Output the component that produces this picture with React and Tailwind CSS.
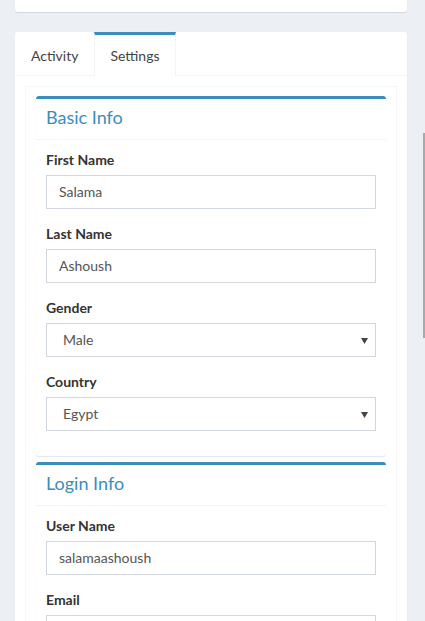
import React from 'react';

const Field = ({ label, value, select }) => (
  <div className="mb-[15px]">
    <label className="block mb-[5px] text-[14px] leading-[20px] font-bold text-[#333]">{label}</label>
    <div className="relative flex items-center h-[34px] border border-[#d2d6de] bg-white">
      <span className={`${select ? 'pl-[16px]' : 'pl-[12px]'} text-[14px] leading-[20px] pb-px text-[#555]`}>{value}</span>
      {select && (
        <svg className="absolute right-[7px] top-[14px]" width="7" height="6" viewBox="0 0 7 6">
          <path d="M0 0 H7 L3.5 6 Z" fill="#444" />
        </svg>
      )}
    </div>
  </div>
);

const Box = ({ title, children }) => (
  <div className="bg-white border-t-[3px] border-[#3c8dbc] rounded-[3px] shadow-[0_1px_1px_rgba(0,0,0,0.1)] mx-px">
    <div className="px-[10px] pt-[8px] pb-[12px] border-b border-[#f4f4f4]">
      <h3 className="text-[18px] leading-[20px] text-[#3c8dbc]">{title}</h3>
    </div>
    <div className="px-[10px] pt-[10px] pb-[10px]">{children}</div>
  </div>
);

export default function App() {
  return (
    <div className="min-h-screen bg-[#ecf0f5] pl-[15px] pr-[18px] relative overflow-hidden" style={{ fontFamily: 'Lato, "Noto Sans", sans-serif' }}>
      {/* top card, cut off */}
      <div className="h-[12px] bg-white rounded-b-[3px] shadow-[0_1px_1px_rgba(0,0,0,0.1)]" />

      {/* tabs card */}
      <div className="mt-[20px] bg-white rounded-[3px] shadow-[0_1px_1px_rgba(0,0,0,0.1)]">
        <div className="flex border-b border-[#f4f4f4] h-[44px]">
          <div className="px-[16px] pt-[14px] text-[14px] leading-[20px] text-[#444]">Activity</div>
          <div className="px-[15px] pt-[11px] text-[14px] leading-[20px] text-[#444] border-t-[3px] border-t-[#3c8dbc] border-x border-x-[#f4f4f4] bg-white -mb-px h-[44px]">Settings</div>
        </div>
        <div className="p-[10px]">
          <div className="border border-[#f7f7f7] px-[9px] pt-[9px] pb-[200px]">
            <Box title="Basic Info">
              <Field label="First Name" value="Salama" />
              <Field label="Last Name" value="Ashoush" />
              <Field label="Gender" value="Male" select />
              <Field label="Country" value="Egypt" select />
            </Box>
            <div className="h-[6px]" />
            <Box title="Login Info">
              <Field label="User Name" value="salamaashoush" />
              <Field label="Email" value="" />
            </Box>
          </div>
        </div>
      </div>

      {/* page scrollbar thumb */}
      <div className="absolute right-0 top-[133px] w-[2px] h-[205px] bg-[#a9a9a9]" />
    </div>
  );
}
